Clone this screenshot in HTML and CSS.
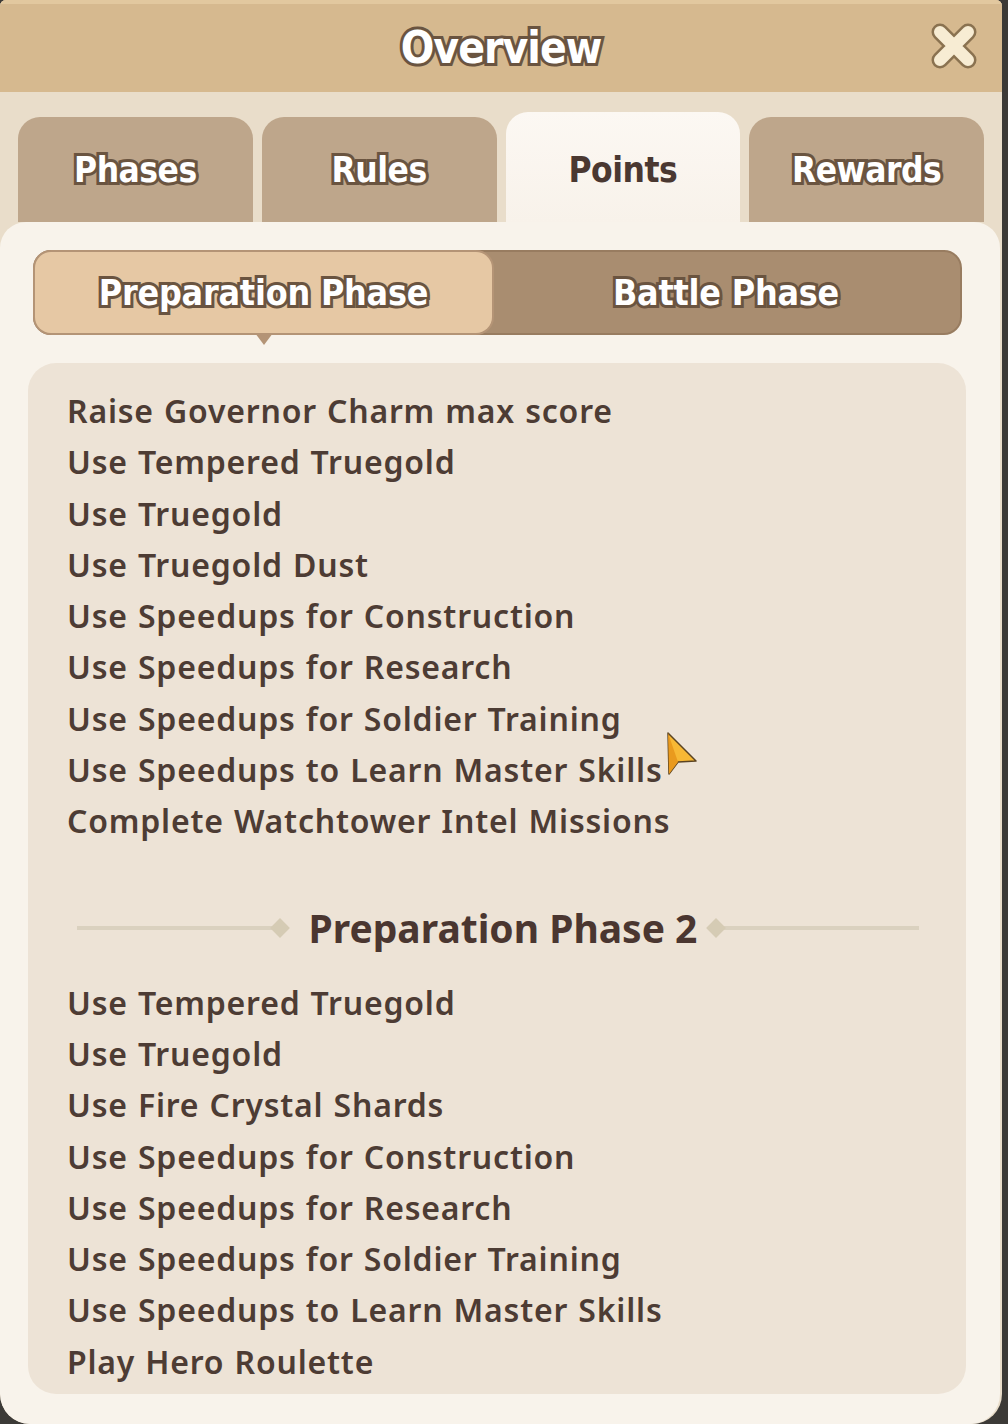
FILE: index.html
```html
<!DOCTYPE html>
<html lang="en">
<head>
  <meta charset="UTF-8">
  <meta name="viewport" content="width=device-width, initial-scale=1.0">
  <title>Overview</title>
  <link rel="stylesheet" href="styles.css">
</head>
<body>
  <div class="window">
    <header class="titlebar">
      <h1 class="outlined">Overview</h1>
      <button class="close" type="button" aria-label="Close">
        <svg width="52" height="52" viewBox="0 0 52 52">
          <path d="M12 12 L40 40 M40 12 L12 40" stroke="#8a7250" stroke-width="17" stroke-linecap="round"/>
          <path d="M12 12 L40 40 M40 12 L12 40" stroke="#f7ecd3" stroke-width="12" stroke-linecap="round"/>
        </svg>
      </button>
    </header>

    <nav class="tabs">
      <div class="tab outlined">Phases</div>
      <div class="tab outlined">Rules</div>
      <div class="tab active">Points</div>
      <div class="tab outlined">Rewards</div>
    </nav>

    <section class="panel">
      <div class="segment">
        <div class="seg active outlined">Preparation Phase</div>
        <div class="seg outlined">Battle Phase</div>
      </div>

      <div class="listbox">
        <ul class="tasks">
          <li>Raise Governor Charm max score</li>
          <li>Use Tempered Truegold</li>
          <li>Use Truegold</li>
          <li>Use Truegold Dust</li>
          <li>Use Speedups for Construction</li>
          <li>Use Speedups for Research</li>
          <li>Use Speedups for Soldier Training</li>
          <li>Use Speedups to Learn Master Skills</li>
          <li>Complete Watchtower Intel Missions</li>
        </ul>

        <div class="divider">
          <span class="rule left"></span>
          <h2>Preparation Phase 2</h2>
          <span class="rule right"></span>
        </div>

        <ul class="tasks">
          <li>Use Tempered Truegold</li>
          <li>Use Truegold</li>
          <li>Use Fire Crystal Shards</li>
          <li>Use Speedups for Construction</li>
          <li>Use Speedups for Research</li>
          <li>Use Speedups for Soldier Training</li>
          <li>Use Speedups to Learn Master Skills</li>
          <li>Play Hero Roulette</li>
        </ul>
      </div>
    </section>
  </div>

  <!-- mouse pointer -->
  <svg class="pointer" width="34" height="46" viewBox="0 0 34 46">
    <path d="M3 2 L31 30 L13 31 L4 43 Z" fill="#f7b835" stroke="#5a4322" stroke-width="1.5" stroke-linejoin="round"/>
    <path d="M3 2 L13 31 L4 43 Z" fill="#e99a1e"/>
  </svg>
</body>
</html>
```

FILE: styles.css
```css
html, body {
  margin: 0;
  padding: 0;
}
body {
  width: 1008px;
  height: 1424px;
  background: #3c3a37;
  font-family: "Noto Sans", "Open Sans", sans-serif;
  position: relative;
  overflow: hidden;
}
.window {
  width: 1002px;
  height: 1424px;
  background: #e9ddca;
  border-radius: 6px 6px 30px 30px;
  overflow: hidden;
  display: flex;
  flex-direction: column;
}

/* white text with a brown outline, used on titles and inactive tabs */
.outlined {
  color: #ffffff;
  -webkit-text-stroke: 6px #6a5440;
  paint-order: stroke fill;
  font-family: "DejaVu Sans Condensed", "DejaVu Sans", sans-serif;
  font-weight: bold;
}

.titlebar {
  height: 88px;
  border-top: 4px solid #e2c89f;
  background: #d6b98f;
  display: flex;
  align-items: center;
  justify-content: center;
  position: relative;
}
.titlebar h1 {
  margin: 0 0 2px 0;
  font-size: 44px;
  letter-spacing: -1px;
}
.close {
  position: absolute;
  right: 22px;
  top: 16px;
  padding: 0;
  border: none;
  background: none;
  width: 52px;
  height: 52px;
}

.tabs {
  display: flex;
  gap: 9px;
  padding: 25px 18px 0;
  height: 105px;
}
.tab {
  flex: 1;
  background: #bea68b;
  border-radius: 22px 22px 0 0;
  display: flex;
  align-items: center;
  justify-content: center;
  font-size: 35px;
  letter-spacing: -0.5px;
}
.tab.active {
  margin-top: -5px;
  background: linear-gradient(#fcf8f3, #f8f2ea);
  color: #4a3831;
  font-family: "DejaVu Sans Condensed", "DejaVu Sans", sans-serif;
  font-weight: bold;
  padding-top: 5px;
}

.panel {
  flex: 1;
  background: #f8f3eb;
  border-radius: 26px 26px 30px 30px;
  margin-right: 2px;
  padding: 28px 34px 30px 28px;
  display: flex;
  flex-direction: column;
}

.segment {
  display: flex;
  height: 81px;
  margin: 0 4px 0 5px;
  background: #a98d70;
  border: 2px solid #987c60;
  border-radius: 18px;
}
.seg {
  flex: 1;
  display: flex;
  align-items: center;
  justify-content: center;
  font-size: 35.5px;
  letter-spacing: -0.2px;
  position: relative;
}
.seg.active {
  flex: 0 0 457px;
  background: #e6c8a4;
  border-radius: 16px;
  box-shadow: 0 0 0 2px #b49476;
}
.seg.active::after {
  content: "";
  position: absolute;
  left: 50%;
  bottom: -12px;
  margin-left: -9px;
  border-left: 9px solid transparent;
  border-right: 9px solid transparent;
  border-top: 12px solid #b49476;
}

.listbox {
  flex: 1;
  margin-top: 28px;
  background: #ede3d6;
  border-radius: 28px;
  padding: 22px 20px 0 39px;
}
.tasks {
  list-style: none;
  margin: 0;
  padding: 0;
}
.tasks li {
  height: 51.3px;
  line-height: 51px;
  font-size: 32px;
  font-weight: 600;
  letter-spacing: 0.8px;
  word-spacing: 1px;
  color: #4d3c34;
  white-space: nowrap;
}

.divider {
  display: flex;
  align-items: center;
  height: 50px;
  margin: 56px 27px 24px 10px;
}
.divider h2 {
  margin: 0 16px 0 26px;
  font-size: 39px;
  font-weight: bold;
  color: #4a3630;
  white-space: nowrap;
}
.rule {
  flex: 1;
  height: 4px;
  background: #dad1bf;
  position: relative;
}
.rule::after {
  content: "";
  position: absolute;
  top: -5px;
  width: 14px;
  height: 14px;
  background: #d5cbb4;
  transform: rotate(45deg);
}
.rule.left::after {
  right: -4px;
}
.rule.right::after {
  left: -4px;
}

.pointer {
  position: absolute;
  left: 665px;
  top: 731px;
}
```
